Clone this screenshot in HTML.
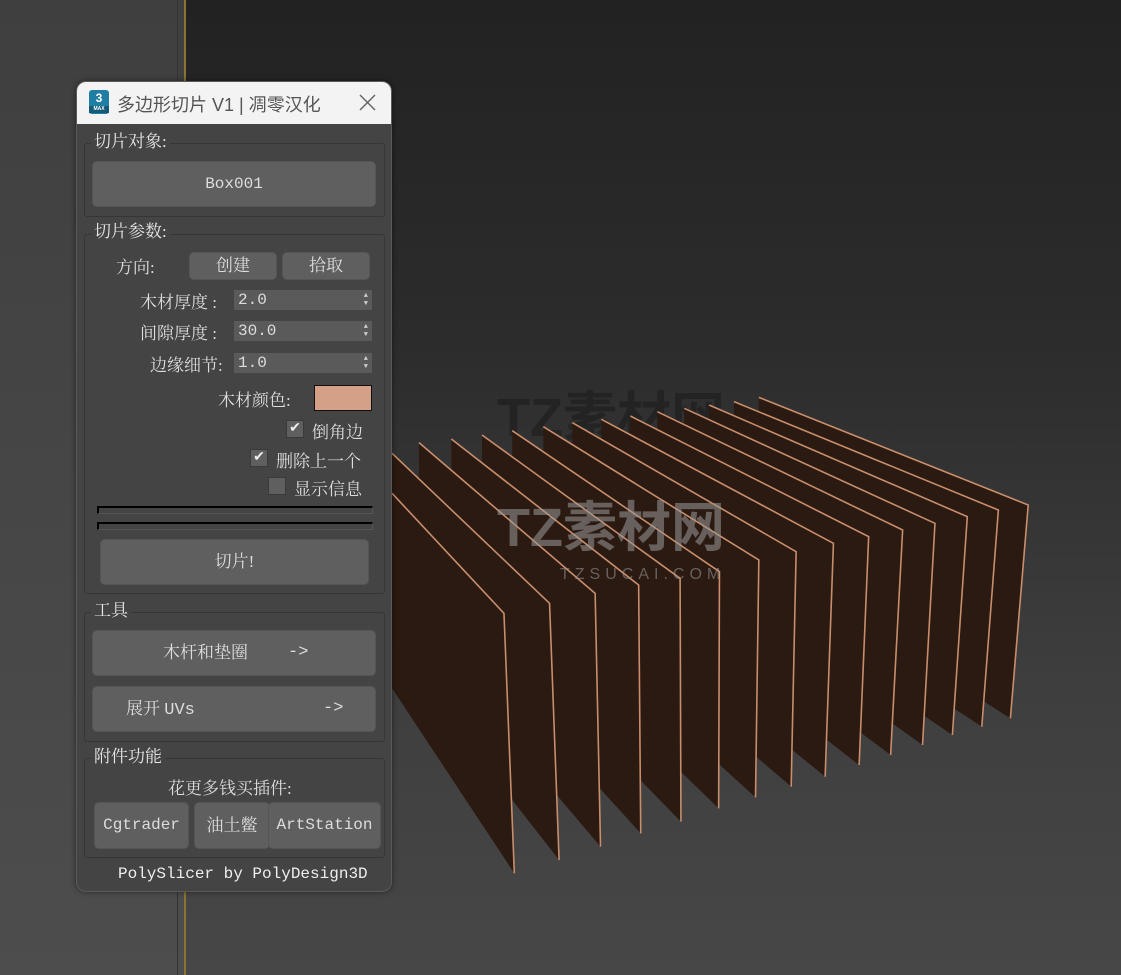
<!DOCTYPE html>
<html><head><meta charset="utf-8"><style>
*{margin:0;padding:0;box-sizing:border-box}
body{width:1121px;height:975px;overflow:hidden;position:relative;background:#2e2e2e;font-family:"Liberation Serif","Noto Serif CJK SC",serif;}
.bgR{position:absolute;left:186px;top:0;width:935px;height:975px;background:linear-gradient(#222 0%,#2c2c2c 35%,#3e3e3e 70%,#474747 100%)}
.bgL{position:absolute;left:0;top:0;width:184px;height:975px;background:linear-gradient(#3f3f3f,#4d4d4d)}
.ln{position:absolute;left:177px;top:0;width:1px;height:975px;background:#333}
.yl{position:absolute;left:184px;top:0;width:2px;height:975px;background:#8a7530}
.dlg{position:absolute;left:76px;top:81px;width:316px;height:811px;background:#444;border-radius:10px;border:1px solid #5a5a5a;overflow:hidden;box-shadow:0 0 6px rgba(0,0,0,.5)}
.tb{position:absolute;left:0;top:0;width:100%;height:42px;background:#f3f3f3;color:#555;font:18px "Liberation Sans","Noto Sans CJK SC",sans-serif}
.a{position:absolute;color:#ddd;font-size:17px;white-space:nowrap}
.m{font-family:"Liberation Mono","Noto Serif CJK SC",monospace}
.grp{position:absolute;border:1px solid #363636;border-radius:3px}
.lg{position:absolute;background:#444;color:#e6e6e6;font-size:17px;padding:0 3px;line-height:19px}
.btn{position:absolute;background:#5f5f5f;border-radius:5px;color:#ddd;text-align:center;font-size:17px;border:1px solid #555}
.sp{position:absolute;background:#5a5a5a;height:20px;color:#ddd;font-size:16px;line-height:20px;padding-left:4px;font-family:"Liberation Mono",monospace}
.sp:after{content:"▲\A▼";white-space:pre;position:absolute;right:4px;top:2px;font-size:7px;line-height:8px;color:#ccc}
.cb{position:absolute;width:18px;height:18px;background:#5f5f5f;border:1px solid #3a3a3a;color:#eee;font-size:14px;line-height:16px;text-align:center}
.bar{position:absolute;left:20px;width:276px;height:8px;border-top:2px solid #000;border-left:2px solid #000;border-bottom:1px solid #555;border-right:1px solid #555}
</style></head><body>
<div class="bgL"></div><div class="ln"></div><div class="bgR"></div><div class="yl"></div>
<svg style="position:absolute;left:0;top:0" width="1121" height="975">
<text x="497" y="436" font-family="Liberation Sans,Noto Sans CJK SC,sans-serif" font-size="54" font-weight="bold" fill="#1c1c1c" opacity=".6">TZ素材网</text>
<text x="560" y="468" font-family="Liberation Sans,sans-serif" font-size="16" fill="#1c1c1c" opacity=".6" letter-spacing="5">TZSUCAI.COM</text>
<g id="s"></g>
<text x="497" y="546" font-family="Liberation Sans,Noto Sans CJK SC,sans-serif" font-size="54" font-weight="bold" fill="#9a9a9a" opacity=".55">TZ素材网</text>
<text x="560" y="579" font-family="Liberation Sans,sans-serif" font-size="16" fill="#9a9a9a" opacity=".55" letter-spacing="5">TZSUCAI.COM</text>
</svg>
<script>
var d=[[5,310,275,670,300,1450],[5,190,385,640,408,1410],[70,158,495,610,508,1370],[148,147,600,585,605,1330],[222,135,700,565,702,1295],[295,122,795,545,793,1255],[370,110,890,510,882,1222],[440,98,980,485,968,1190],[510,88,1070,460,1050,1160],[580,78,1155,440,1132,1125],[645,65,1237,420,1208,1095],[710,55,1315,400,1285,1065],[770,45,1393,380,1357,1035],[830,35,1468,360,1428,1010],[890,22,1540,345,1497,985]];
var h='';
for(var i=14;i>=0;i--){var q=d[i];
var tlx=q[0]/2.413+390,tly=q[1]/3+390,trx=q[2]/2.413+390,tr_y=q[3]/3+390,brx=q[4]/2.413+390,bry=q[5]/3+390;
var bly=tly+(bry-tr_y)*0.75;
h+='<polygon points="'+tlx+','+tly+' '+trx+','+tr_y+' '+brx+','+bry+' '+tlx+','+bly+'" fill="#2b1a12"/>';
h+='<polyline points="'+tlx+','+tly+' '+trx+','+tr_y+' '+brx+','+bry+'" fill="none" stroke="#c88e6c" stroke-width="1.6"/>';}
document.getElementById('s').innerHTML=h;
</script>
<div class="dlg">
<div class="tb">
<div style="position:absolute;left:12px;top:8px;width:20px;height:24px;background:#1f7ea3;border-radius:3px;color:#fff;font:bold 12px 'Liberation Sans';text-align:center;line-height:16px">3<div style="background:#145a76;font-size:5px;line-height:7px">MAX</div></div>
<div style="position:absolute;left:40px;top:9px">多边形切片 V1 | 凋零汉化</div>
<svg style="position:absolute;left:282px;top:12px" width="17" height="17"><path d="M1 1L16 16M16 1L1 16" stroke="#666" stroke-width="1.5"/></svg>
</div>
<div class="grp" style="left:7px;top:61px;width:301px;height:74px"></div><div class="lg" style="left:14px;top:50px">切片对象:</div>
<div class="btn m" style="left:15px;top:79px;width:284px;height:46px;line-height:44px;font-size:16px">Box001</div>
<div class="grp" style="left:7px;top:152px;width:301px;height:360px"></div><div class="lg" style="left:14px;top:140px">切片参数:</div>
<div class="a" style="left:39px;top:171px">方向:</div>
<div class="btn" style="left:112px;top:170px;width:88px;height:28px;line-height:26px">创建</div>
<div class="btn" style="left:205px;top:170px;width:88px;height:28px;line-height:26px">拾取</div>
<div class="a" style="left:63px;top:206px">木材厚度 :</div><div class="sp" style="left:157px;top:208px;width:138px">2.0</div>
<div class="a" style="left:63px;top:237px">间隙厚度 :</div><div class="sp" style="left:157px;top:239px;width:138px">30.0</div>
<div class="a" style="left:73px;top:269px">边缘细节:</div><div class="sp" style="left:157px;top:271px;width:138px">1.0</div>
<div class="a" style="left:141px;top:304px">木材颜色:</div>
<div style="position:absolute;left:237px;top:303px;width:58px;height:26px;background:#d4a088;border:1px solid #111"></div>
<div class="cb" style="left:209px;top:338px">✔</div><div class="a" style="left:235px;top:336px">倒角边</div>
<div class="cb" style="left:173px;top:367px">✔</div><div class="a" style="left:199px;top:365px">删除上一个</div>
<div class="cb" style="left:191px;top:395px"></div><div class="a" style="left:217px;top:393px">显示信息</div>
<div class="bar" style="top:424px"></div><div class="bar" style="top:440px"></div>
<div class="btn" style="left:23px;top:457px;width:269px;height:46px;line-height:44px">切片!</div>
<div class="grp" style="left:7px;top:530px;width:301px;height:130px"></div><div class="lg" style="left:14px;top:519px">工具</div>
<div class="btn" style="left:15px;top:548px;width:284px;height:46px;line-height:44px;text-align:left;padding-left:70px">木杆和垫圈<span class="m" style="position:absolute;left:195px">-&gt;</span></div>
<div class="btn" style="left:15px;top:604px;width:284px;height:46px;line-height:44px;text-align:left;padding-left:33px">展开 <span class="m">UVs</span><span class="m" style="position:absolute;left:230px">-&gt;</span></div>
<div class="grp" style="left:7px;top:676px;width:301px;height:100px"></div><div class="lg" style="left:14px;top:665px">附件功能</div>
<div class="a" style="left:91px;top:692px">花更多钱买插件:</div>
<div class="btn m" style="left:17px;top:720px;width:95px;height:47px;line-height:45px;font-size:16px">Cgtrader</div>
<div class="btn" style="left:117px;top:720px;width:76px;height:47px;line-height:45px">油土鳖</div>
<div class="btn m" style="left:191px;top:720px;width:113px;height:47px;line-height:45px;font-size:16px">ArtStation</div>
<div class="a m" style="left:41px;top:783px;color:#eee;font-size:16px">PolySlicer by PolyDesign3D</div>
</div>
</body></html>
